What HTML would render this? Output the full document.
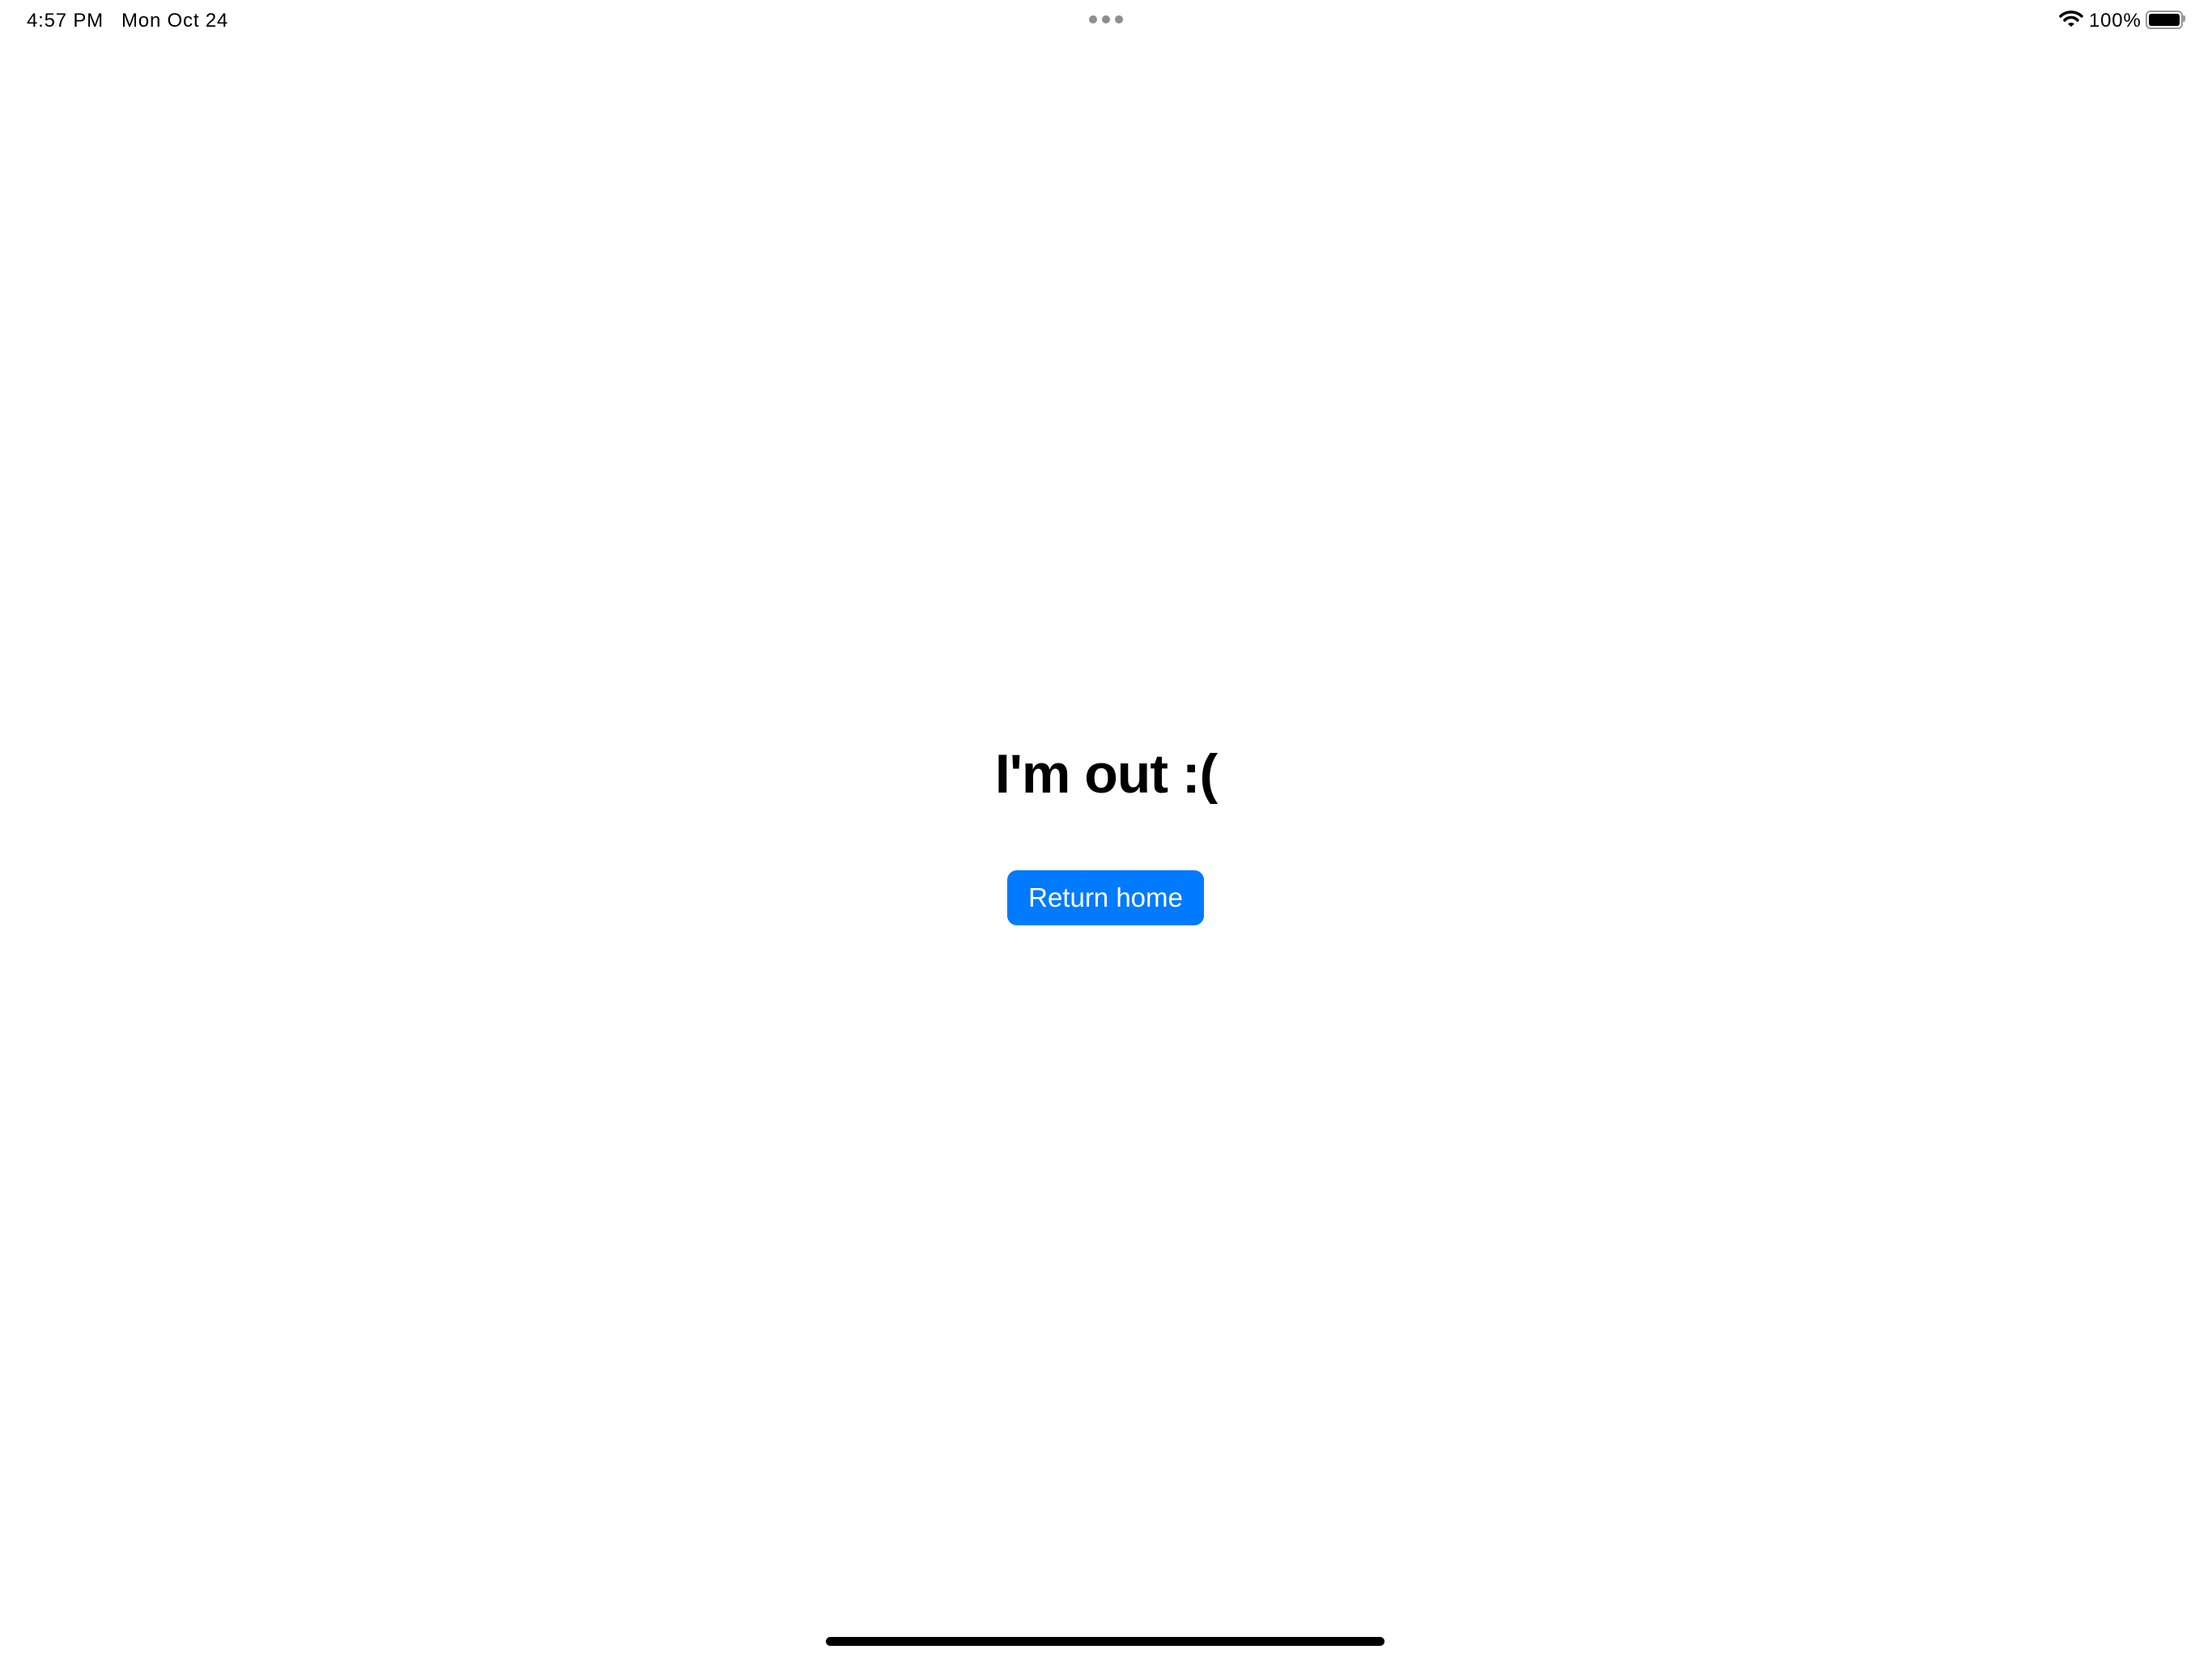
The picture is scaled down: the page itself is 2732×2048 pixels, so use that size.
<!DOCTYPE html>
<html><head><meta charset="utf-8"><style>
html,body{margin:0;padding:0;width:2732px;height:2048px;background:#fff;overflow:hidden;font-family:"Liberation Sans",sans-serif;position:relative}
.abs{position:absolute}
.sb{font-size:24px;color:#000;top:12px;line-height:28px;letter-spacing:0.8px}
.dot{width:10px;height:10px;border-radius:50%;background:#8e8e8e;top:19px}
h1{position:absolute;left:0;width:2732px;text-align:center;top:916px;margin:0;font-size:68px;font-weight:bold;line-height:80px;letter-spacing:-1px}
.btn{left:1244px;top:1075px;width:243px;height:68px;background:#007aff;border-radius:12px;color:#fff;font-size:33px;text-align:center;line-height:68px}
</style></head><body>
<div class="abs sb" style="left:33px">4:57 PM</div>
<div class="abs sb" style="left:150px">Mon Oct 24</div>
<div class="abs dot" style="left:1345px"></div>
<div class="abs dot" style="left:1361px"></div>
<div class="abs dot" style="left:1377px"></div>
<svg class="abs" style="left:2543px;top:12px" width="30" height="22" viewBox="0 0 30 22">
<path d="M2 8 A19 19 0 0 1 28 8" fill="none" stroke="#000" stroke-width="3.5" stroke-linecap="round"/>
<path d="M7 13 A11 11 0 0 1 23 13" fill="none" stroke="#000" stroke-width="3.5" stroke-linecap="round"/>
<path d="M11 17.5 L15 21 L19 17.5 A6 6 0 0 0 11 17.5Z" fill="#000"/>
</svg>
<div class="abs sb" style="left:2580px">100%</div>
<div class="abs" style="left:2650px;top:13px;width:42px;height:19px;border:2px solid #999;border-radius:6px;"></div>
<div class="abs" style="left:2654px;top:17px;width:38px;height:15px;background:#000;border-radius:3px"></div>
<div class="abs" style="left:2696px;top:19px;width:3px;height:8px;background:#999;border-radius:0 2px 2px 0"></div>
<h1>I'm out :(</h1>
<div class="abs btn">Return home</div>
<div class="abs" style="left:1020px;top:2022px;width:690px;height:11px;background:#000;border-radius:6px"></div>
</body></html>
